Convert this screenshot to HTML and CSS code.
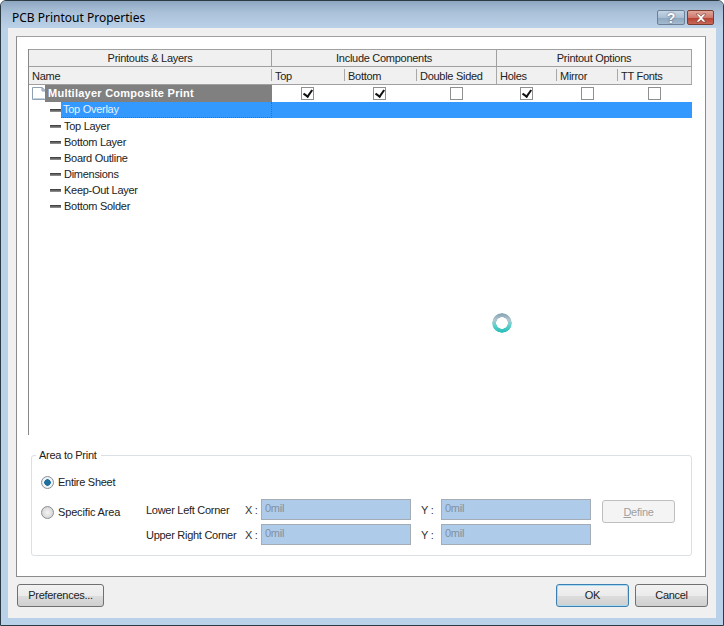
FILE: index.html
```html
<!DOCTYPE html>
<html lang="en">
<head>
<meta charset="utf-8">
<title>PCB Printout Properties</title>
<link rel="stylesheet" href="styles.css">
</head>
<body>
<div class="window">
  <header class="titlebar">
    <span class="title">PCB Printout Properties</span>
    <div class="caption-buttons">
      <span class="cap-btn help">?</span>
      <span class="cap-btn close">
        <svg width="16" height="10" viewBox="0 0 16 10"><path d="M3 1h3l2 2.200L10 1h3l-3.500 4L13 9h-3L8 6.800 6 9H3l3.500-4z" fill="#fff" stroke="#7a3a30" stroke-width=".6"/></svg>
      </span>
    </div>
  </header>
  <div class="client">
    <main class="panel">
      <section class="table">
        <div class="group">Printouts &amp; Layers</div>
        <div class="group span3">Include Components</div>
        <div class="group span3 last">Printout Options</div>
        <div class="col">Name</div>
        <div class="col">Top</div>
        <div class="col">Bottom</div>
        <div class="col sec">Double Sided</div>
        <div class="col">Holes</div>
        <div class="col">Mirror</div>
        <div class="col last">TT Fonts</div>

        <div class="name-cell">
          <svg class="doc" width="14" height="13" viewBox="0 0 14 13"><path d="M.5.500h9.500l3.500 3.500v8.500H.5z" fill="#fff" stroke="#8fa0b5"/><path d="M10 .5v3.500h3.500z" fill="#c9d5e3" stroke="#8fa0b5"/><path d="M1.500 11.500h11" stroke="#c4d0de"/></svg>
          <span class="root-label">Multilayer Composite Print</span>
        </div>
        <div class="check-cell"><span class="check on"></span></div>
        <div class="check-cell nudge"><span class="check on"></span></div>
        <div class="check-cell"><span class="check"></span></div>
        <div class="check-cell"><span class="check on"></span></div>
        <div class="check-cell flush"><span class="check"></span></div>
        <div class="check-cell"><span class="check"></span></div>

        <div class="layer selected">
          <span class="dash"></span><span class="layer-label">Top Overlay</span>
        </div>
        <div class="layer"><span class="dash"></span><span class="layer-label">Top Layer</span></div>
        <div class="layer"><span class="dash"></span><span class="layer-label">Bottom Layer</span></div>
        <div class="layer"><span class="dash"></span><span class="layer-label">Board Outline</span></div>
        <div class="layer"><span class="dash"></span><span class="layer-label">Dimensions</span></div>
        <div class="layer"><span class="dash"></span><span class="layer-label">Keep-Out Layer</span></div>
        <div class="layer"><span class="dash"></span><span class="layer-label">Bottom Solder</span></div>
      </section>

      <fieldset class="area">
        <legend>Area to Print</legend>
        <div class="radio-row first"><span class="radio on"></span>Entire Sheet</div>
        <div class="specific">
          <div class="radio-row"><span class="radio"></span>Specific Area</div>
          <div class="coords">
            <span class="corner">Lower Left Corner</span><span class="axis">X :</span><span class="input">0mil</span><span class="axis y">Y :</span><span class="input">0mil</span>
            <button class="define" type="button"><u>D</u>efine</button>
            <span class="corner">Upper Right Corner</span><span class="axis">X :</span><span class="input">0mil</span><span class="axis y">Y :</span><span class="input">0mil</span>
          </div>
        </div>
      </fieldset>
    </main>
    <footer class="footer">
      <button class="btn prefs" type="button">Preferences...</button>
      <div class="actions">
        <button class="btn ok" type="button">OK</button>
        <button class="btn cancel" type="button">Cancel</button>
      </div>
    </footer>
  </div>
  <div class="spinner"></div>
</div>
</body>
</html>
```
FILE: styles.css
```css
* { box-sizing: border-box; }
html, body { margin: 0; padding: 0; }
body { width: 724px; height: 626px; overflow: hidden; font-family: "Liberation Sans", Arial, sans-serif; font-size: 11px; letter-spacing: -.28px; color: #111; background: #fff; }

.window { position: relative; width: 724px; height: 626px; border: 1px solid #2c3a44; border-radius: 6px 6px 0 0; background: #b9d2ea; padding: 0 7px 7px; display: flex; flex-direction: column; }

.titlebar { height: 27px; margin: 0 -7px; padding: 0 9px 0 11px; display: flex; align-items: flex-start; justify-content: space-between; background: linear-gradient(#8ea6c0 0, #a9c0d8 40%, #bad1e8 100%); border-radius: 5px 5px 0 0; }
.title { font-family: "Noto Sans", sans-serif; font-size: 12px; letter-spacing: 0; color: #000; line-height: 16px; padding-top: 9px; }
.caption-buttons { display: flex; gap: 2px; padding-top: 9px; }
.cap-btn { height: 15px; display: flex; align-items: center; justify-content: center; border: 1px solid #6d7f92; border-radius: 2px; }
.help { width: 28px; background: linear-gradient(#c5d6e6 0, #a9bfd4 50%, #8ca6bf 52%, #a4bbd0 100%); color: #fff; font-size: 14px; font-weight: bold; text-shadow: 0 0 2px #445; }
.close { width: 27px; background: linear-gradient(#e0a79c 0, #cf7a6c 50%, #b5402f 52%, #c8685a 100%); border-color: #7d3d33; }

.client { flex: 1; background: #f0f0f0; padding: 8px 10px 0 8px; display: flex; flex-direction: column; min-height: 0; }
.panel { height: 541px; background: #fff; border: 1px solid #8c8c8c; border-top-color: #a0a0a0; padding: 12px 13px 0 11px; display: flex; flex-direction: column; }

.table { height: 386px; display: grid; grid-template-columns: 243px 73px 72px 80px 60px 61px 74px; grid-template-rows: 18px 18px 17px repeat(7, 16px); align-content: start; border-left: 1px solid #888; width: 664px; }
.group, .col { background: #f0f0f0; border-top: 1px solid #a0a0a0; border-bottom: 1px solid #a0a0a0; display: flex; align-items: center; line-height: 1; color: #222; }
.group { justify-content: center; border-right: 1px solid #a0a0a0; height: 18px; padding-top: 1px; }
.group.span3 { grid-column: span 3; }
.col { border-top: 0; padding: 1px 0 0 3px; position: relative; height: 18px; }
.col::after { content: ""; position: absolute; right: 0; top: 2px; bottom: 3px; width: 1px; background: #a8a8a8; }
.col:first-of-type::after, .col.sec::after, .col.last::after { top: 0; bottom: 0; }

.name-cell { display: flex; align-items: center; height: 17px; }
.doc { flex: none; margin-left: 3px; }
.root-label { flex: 1; background: #808080; color: #fff; font-weight: bold; height: 17px; line-height: 16px; letter-spacing: .25px; margin-left: -1px; padding-left: 3px; }
.check-cell { display: flex; justify-content: center; align-items: center; height: 17px; padding-right: 2px; }
.check-cell.nudge { padding-right: 4px; }
.check-cell.flush { padding-right: 0; }
.check { width: 13px; height: 13px; border: 1px solid #8e8f8f; background: #fff; position: relative; display: block; }
.check.on::after { content: ""; position: absolute; left: 3px; top: 0; width: 4px; height: 7px; border: solid #111; border-width: 0 2px 2px 0; transform: rotate(35deg); }

.layer { grid-column: 1 / -1; height: 16px; display: flex; align-items: center; padding-left: 21px; position: relative; }
.dash { width: 11px; height: 3px; background: linear-gradient(#333, #999); flex: none; margin-right: 3px; }
.layer-label { color: #222; line-height: 15px; }
.selected { background: linear-gradient(90deg, #fff 32px, #3399ff 32px); }
.selected .layer-label { position: absolute; left: 32px; top: 0; width: 211px; height: 16px; background: #3399ff; color: #e8f2fb; padding-left: 2px; border: 1px dotted #666; border-width: 0 1px 1px 0; line-height: 15px; }

.area { margin: 14px 0 0 3px; width: 661px; height: 107px; border: 1px solid #dcdfe3; border-radius: 3px; padding: 0 0 0 9px; min-width: 0; }
.area legend { padding: 0 4px 0 3px; margin-left: -5px; color: #222; line-height: 13px; font-size: 11px; }
.radio-row { display: flex; align-items: center; gap: 4px; color: #222; height: 14px; }
.radio-row.first { margin-top: 13px; }
.radio { width: 13px; height: 13px; border-radius: 50%; border: 1px solid #8a8f94; background: radial-gradient(circle, #f4f4f4 0, #d8d8d8 70%); flex: none; }
.radio.on { background: radial-gradient(circle, #1c6f9f 0 3px, #eef2f5 3.5px); }
.specific { display: flex; margin-top: 10px; align-items: flex-start; }
.specific > .radio-row { margin-top: 6px; width: 105px; flex: none; letter-spacing: -.15px; }
.coords { display: grid; grid-template-columns: 99px 16px 150px 30px 150px 84px; grid-auto-rows: 21px; row-gap: 4px; align-items: center; }
.corner { color: #222; }
.axis { color: #333; }
.axis.y { padding-left: 10px; }
.input { height: 21px; background: #aecbea; border: 1px solid #a4adb6; color: #82909f; padding-left: 3px; line-height: 17px; }
.define { grid-column: 6; grid-row: 1; justify-self: end; align-self: start; margin-top: 1px; width: 73px; height: 23px; font: inherit; letter-spacing: inherit; color: #a0a0a0; background: #f4f4f4; border: 1px solid #bfbfbf; border-radius: 3px; padding: 0; }

.footer { display: flex; justify-content: space-between; padding-top: 7px; }
.btn { height: 23px; font: inherit; letter-spacing: inherit; color: #222; border: 1px solid #707070; border-radius: 3px; background: linear-gradient(#f2f2f2 0, #ebebeb 50%, #dddddd 51%, #cfcfcf 100%); padding: 0 0 1px; }
.prefs { width: 87px; margin-left: 1px; }
.actions { display: flex; gap: 6px; margin-right: -2px; }
.ok { width: 73px; border-color: #3c7fb1; box-shadow: inset 0 0 0 1px #a8dcf5; }
.cancel { width: 73px; }

.spinner { position: absolute; left: 491px; top: 312px; width: 20px; height: 20px; border-radius: 50%; background: linear-gradient(#7f9fb0, #b4c8d0 35%, #62cfcb 62%, #1fbdb5); -webkit-mask: radial-gradient(circle, transparent 0 5.500px, #000 6px); mask: radial-gradient(circle, transparent 0 5.500px, #000 6px); }
```
